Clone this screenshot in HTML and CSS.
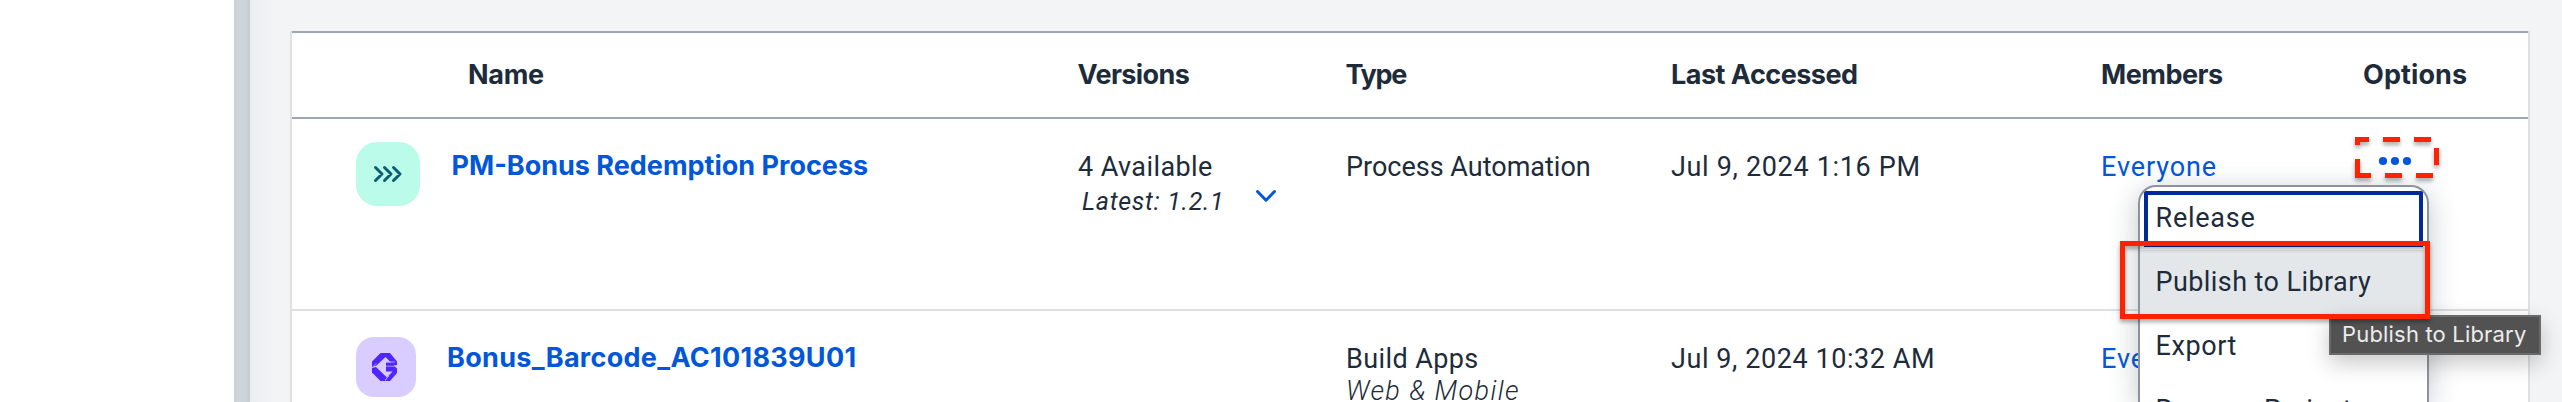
FILE: index.html
```html
<!DOCTYPE html>
<html lang="en">
<head>
<meta charset="utf-8">
<title>Projects</title>
<link rel="stylesheet" href="styles.css">
</head>
<body>
<div class="shell">
  <aside class="side"></aside>
  <div class="divider"></div>
  <main class="content">
    <div class="table">
      <div class="row head">
        <div></div>
        <div class="h-name">Name</div>
        <div class="h-versions">Versions</div>
        <div class="h-type">Type</div>
        <div class="h-accessed">Last Accessed</div>
        <div class="h-members">Members</div>
        <div class="h-options">Options</div>
      </div>
      <div class="row">
        <div class="icon process">
          <svg width="30" height="18" viewBox="0 0 30 18" fill="none" stroke="#0b5f6e" stroke-width="3" stroke-linecap="round" stroke-linejoin="round"><path d="M2.500 2.500L9 9l-6.500 6.500M11.500 2.500L18 9l-6.500 6.500M20.500 2.500L27 9l-6.500 6.500"/></svg>
        </div>
        <div class="name n1">PM-Bonus Redemption Process</div>
        <div class="versions">
          <div>
            <div class="avail">4 Available</div>
            <div class="latest">Latest: 1.2.1</div>
          </div>
          <svg class="chev" width="22" height="14" viewBox="0 0 22 14" fill="none" stroke="#0057d9" stroke-width="3" stroke-linecap="round" stroke-linejoin="round"><path d="M2.500 2.500L11 11.200l8.500-8.700"/></svg>
        </div>
        <div class="type t1">Process Automation</div>
        <div class="date d1">Jul 9, 2024 1:16 PM</div>
        <div class="link">Everyone</div>
        <div class="opts">
          <svg width="34" height="10" viewBox="0 0 34 10" fill="#0057d9"><circle cx="5" cy="5" r="4.100"/><circle cx="17" cy="5" r="4.100"/><circle cx="29" cy="5" r="4.100"/></svg>
        </div>
      </div>
      <div class="row last">
        <div class="icon apps">
          <svg width="28" height="30" viewBox="0 0 28 30"><g fill="#4f26ff"><path d="M9.500 1h9.500l7 8.500v2H21L14.500 5 5.500 13.500 1 15V9.500z"/><path d="M1 16l4-1 11 10.500-2 3.500H9.500L1 20.500z"/><path d="M15 10.500h11v2.800h-3.300l3.300 3.200v4.500L19 29h-4.500l2-4 5-5.500H15z"/></g><path d="M15 14.200h9M1 15.600l4.500-4.500M14 28l4-4M15 10h9" stroke="#b6a0ff" stroke-width=".9" fill="none"/></svg>
        </div>
        <div class="name n2">Bonus_Barcode_AC101839U01</div>
        <div></div>
        <div class="type">
          <div class="t2">Build Apps</div>
          <div class="sub">Web &amp; Mobile</div>
        </div>
        <div class="date d2">Jul 9, 2024 10:32 AM</div>
        <div class="link">Everyone</div>
        <div></div>
      </div>
    </div>
  </main>
</div>

<div class="menu">
  <div class="item focused">Release</div>
  <div class="item active">Publish to Library</div>
  <div class="item export">Export</div>
  <div class="item rename">Rename Project</div>
</div>

<svg class="dashes" width="92" height="54" viewBox="0 0 92 54" fill="#ff2200"><path d="M5 5h14v5h-9v3H5zM33 5h17v5H33zM64 5h17v5H64zM84 16h5v17h-5zM5 27h5v14h11v5H5zM35 41h17v5H35zM66 41h17v5H66z"/></svg>
<div class="tip">Publish to Library</div>
<div class="mark"></div>
</body>
</html>
```
FILE: styles.css
```css
* { box-sizing: border-box; }
html { height: 402px; overflow: hidden; }
body {
  margin: 0;
  width: 2562px;
  height: 402px;
  overflow: hidden;
  position: relative;
  background: #fff;
  color: #1d2b3a;
  font: 27px/36px Roboto, sans-serif;
  white-space: nowrap;
}
.shell { display: flex; height: 402px; }
.side { width: 234px; background: #fff; }
.divider { width: 16px; background: linear-gradient(90deg, #c8cfd3, #cfd5d9 20%, #cfd4d8 75%, #c3cbd1); }
.content {
  flex: 1;
  height: 402px;
  overflow: hidden;
  padding: 31px 32px 0 40px;
  background: linear-gradient(90deg, #ebeef0, #f2f4f6 24px, #f3f4f6 40px);
}
.table {
  height: 371px;
  overflow: hidden;
  background: #fff;
  border: solid #dfe0e2;
  border-width: 0 2px;
}
.row {
  display: grid;
  grid-template-columns: 158px 626px 268px 326px 430px 261px 167px;
  height: 192px;
  border-bottom: 2px solid #e0e0e0;
}
.last { height: 91px; border-bottom: 0; }
.head {
  height: 88px;
  border-top: 2px solid #9ca6b4;
  border-bottom: 2px solid #9ca6b4;
  align-items: center;
  font-family: Inter, sans-serif;
  font-weight: 700;
}
.h-name { padding-left: 18px; letter-spacing: -.3px; }
.h-versions { padding-left: 1.5px; letter-spacing: -.6px; }
.h-type { padding-left: 1.5px; letter-spacing: -1.3px; }
.h-accessed { padding-left: 1px; letter-spacing: -.5px; }
.h-members { padding-left: 1px; letter-spacing: -.5px; }
.h-options { padding-left: 2px; letter-spacing: .1px; }
.icon {
  width: 64px;
  height: 64px;
  margin: 23px 0 0 64px;
  border-radius: 21px;
  background: #bbfbea;
  display: grid;
  place-items: center;
}
.icon.apps { width: 60px; height: 60px; margin-top: 26px; border-radius: 18px; background: #d9ccff; }
.apps svg { margin-right: 3px; }
.name { padding-top: 29px; color: #0057d9; font-family: Inter, sans-serif; font-weight: 700; }
.n1 { padding-left: 1.500px; letter-spacing: 0; }
.n2 { margin-left: -3px; letter-spacing: .3px; }
.versions { display: flex; padding: 30px 0 0 2px; }
.avail { letter-spacing: .41px; }
.latest { font-size: 25px; line-height: 34px; font-style: italic; letter-spacing: .7px; padding-left: 4px; }
.chev { margin: 40px 0 0 31px; }
.type { padding: 30px 0 0 2px; }
.t1 { letter-spacing: 0; }
.t2 { letter-spacing: .4px; }
.sub { font-style: italic; font-weight: 300; letter-spacing: 1.37px; line-height: 28px; }
.date { padding: 30px 0 0 1px; letter-spacing: .67px; }
.date.d2 { letter-spacing: .57px; }
.link { padding: 30px 0 0 1px; color: #0057d9; letter-spacing: .9px; }
.opts { padding: 37px 0 0 17px; line-height: 0; }
.menu {
  position: absolute;
  left: 2138px;
  top: 185px;
  width: 291px;
  height: 217px;
  border: 2px solid #8b949e;
  border-bottom: 0;
  border-radius: 18px 18px 0 0;
  background: #fff;
  box-shadow: 0 6px 28px rgba(34, 54, 73, .28);
  padding-top: 4px;
  overflow: hidden;
}
.item { height: 64px; padding: 14px 0 0 15.5px; letter-spacing: .42px; }
.item.focused { height: 56px; margin: 0 4px 3px; padding: 5px 0 0 7.5px; border: 4px solid #002a9b; letter-spacing: .75px; }
.item.active { background: #e3e7ea; }
.item.export { letter-spacing: .6px; }
.item.rename { letter-spacing: .45px; }
.dashes { position: absolute; left: 2350px; top: 132px; filter: drop-shadow(0 3px 2px rgba(0, 0, 0, .35)); }
.tip {
  position: absolute;
  left: 2329px;
  top: 315px;
  width: 212px;
  height: 40px;
  border: 2px solid #6a6a6a;
  background: #525252;
  box-shadow: 0 8px 22px rgba(0, 0, 0, .22);
  color: #ececec;
  font: 22px/34px Inter, sans-serif;
  letter-spacing: .18px;
  padding-left: 11px;
}
.mark {
  position: absolute;
  left: 2120px;
  top: 241px;
  width: 310px;
  height: 78px;
  border: 5px solid #ff2200;
  filter: drop-shadow(0 3px 2px rgba(0, 0, 0, .35));
}
```
